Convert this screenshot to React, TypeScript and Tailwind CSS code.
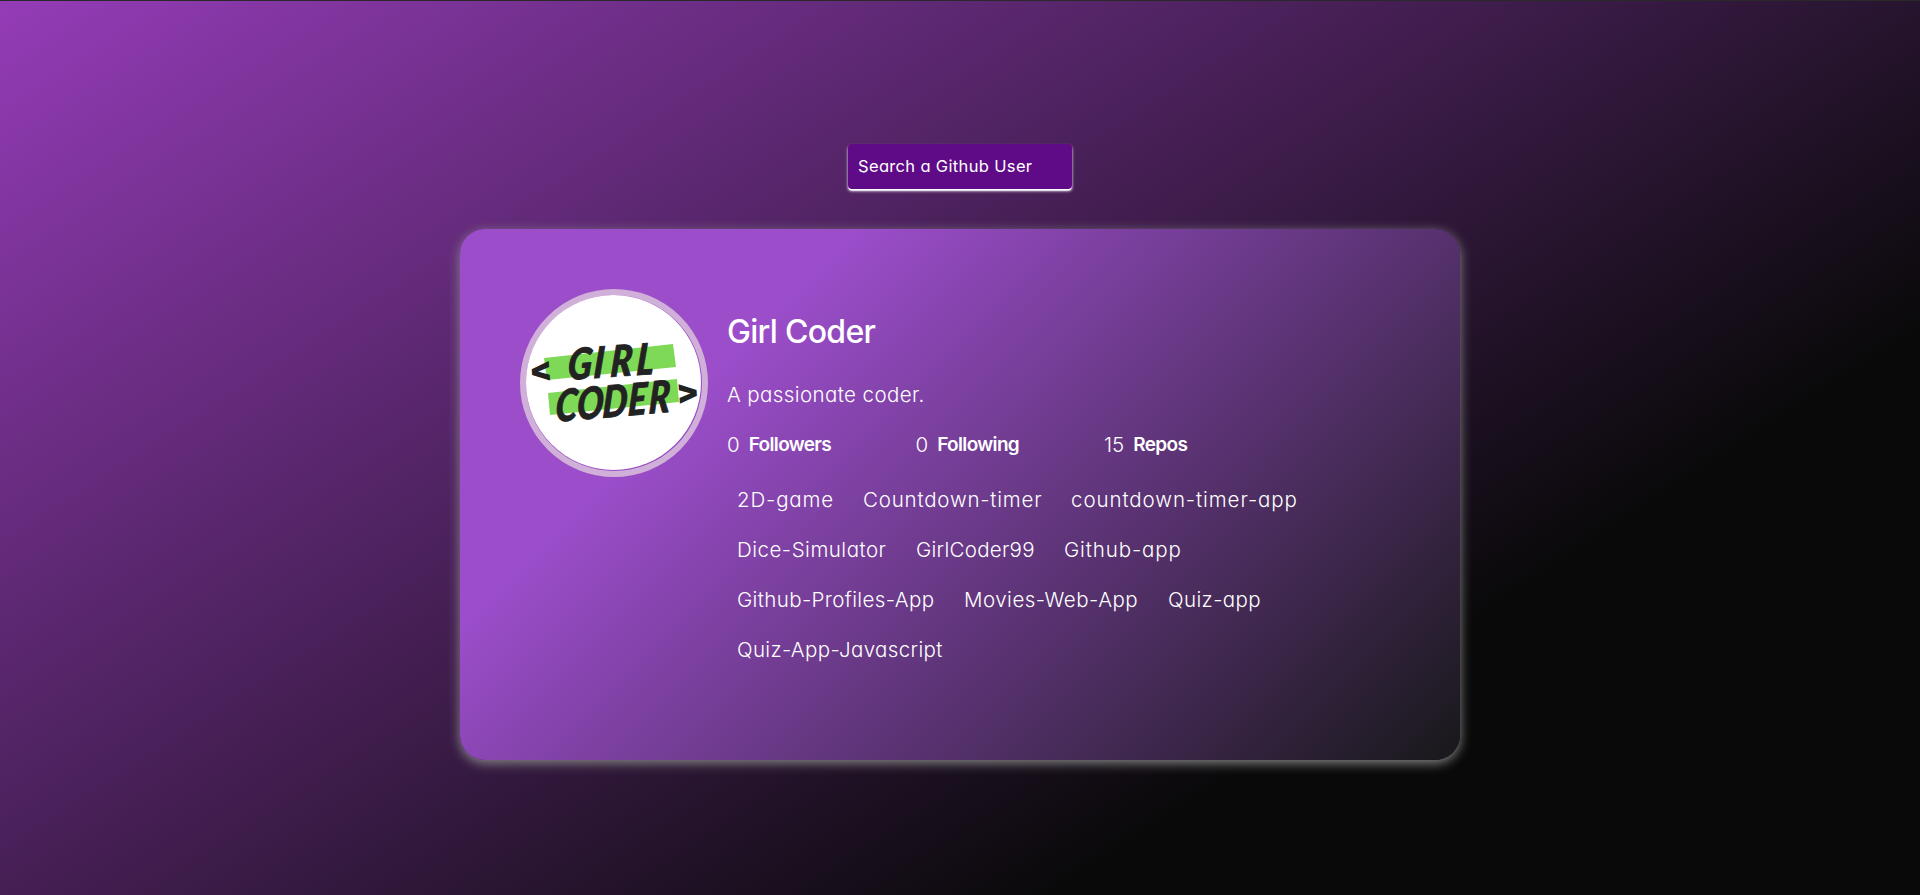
const repos = [
  { name: "2D-game", style: "w-[96px] tracking-[0.85px]" },
  { name: "Countdown-timer", style: "w-[178px] tracking-[0.8px]" },
  { name: "countdown-timer-app", style: "w-[226px] tracking-[0.92px]" },
  { name: "Dice-Simulator", style: "w-[149px] tracking-[0.5px]" },
  { name: "GirlCoder99", style: "w-[118px] tracking-[0.28px]" },
  { name: "Github-app", style: "w-[118px] tracking-[0.88px]" },
  { name: "Github-Profiles-App", style: "w-[197px] tracking-[0.38px]" },
  { name: "Movies-Web-App", style: "w-[174px] tracking-[0.5px]" },
  { name: "Quiz-app", style: "w-[93px] tracking-[0.4px]" },
  { name: "Quiz-App-Javascript", style: "w-[206px] tracking-[0.35px]" },
];

const stats = [
  { count: "0", label: "Followers" },
  { count: "0", label: "Following" },
  { count: "15", label: "Repos" },
];

function Avatar() {
  return (
    <svg className="size-[188px] shrink-0" viewBox="0 0 188 188" role="img">
      <circle cx="94" cy="94" r="91" fill="none" stroke="#d0b0d8" strokeWidth="6" />
      <circle cx="93.5" cy="93.5" r="87.5" fill="#fff" />
      <path d="M24 69 153 55l3 23L27 91zM28 104l129-14 2 23-129 13z" fill="#7ed957" />
      <g fill="#222" stroke="#222" strokeLinejoin="round" className="font-['Lato'] font-black italic">
        <text transform="translate(47 91) rotate(-4) skewX(-8) scale(.84 1)" fontSize="43" strokeWidth=".8" x="0 31 51 82">GIRL</text>
        <text transform="translate(35 133) rotate(-5) skewX(-8) scale(.8 1)" fontSize="44" strokeWidth=".8" x="0 27 59 91 117">CODER</text>
      </g>
      <g fill="#222" className="font-['Inter'] font-black">
        <text transform="translate(10 93) rotate(-4)" fontSize="33" textLength="23" lengthAdjust="spacingAndGlyphs">&lt;</text>
        <text transform="translate(157 115) rotate(-4)" fontSize="33" textLength="23" lengthAdjust="spacingAndGlyphs">&gt;</text>
      </g>
    </svg>
  );
}

export default function App() {
  return (
    <main className="flex h-[895px] flex-col items-center border-t border-[#292929] bg-[linear-gradient(147deg,#943cb7_0%,#090909_74%)] pt-[143px] font-['Inter',sans-serif] font-light text-white [font-feature-settings:'cv11']">
      <input
        className="h-[45px] w-[224px] rounded bg-[#5f0a87] px-2.5 pb-0.5 text-[16.5px] font-normal tracking-[0.34px] shadow-[0_2px_0_-0.5px_#fff,0_2px_3px_#fff] placeholder:text-white placeholder:opacity-100"
        placeholder="Search a Github User"
      />
      <section className="mt-10 flex h-[531px] w-[1000px] rounded-[25px] bg-[linear-gradient(135deg,#9b4dca_26%,#18181a_100%)] p-[60px] shadow-[0_3px_12px_#888]">
        <Avatar />
        <div className="ml-[19px] w-[620px] pt-[19px] text-[20.5px] leading-[30px]">
          <h2 className="text-[32px] leading-[48px] font-medium tracking-[-0.7px]">Girl Coder</h2>
          <p className="mt-6 tracking-[0.4px]">A passionate coder.</p>
          <ul className="mt-5 flex">
            {stats.map(({ count, label }) => (
              <li key={label} className="flex w-[188.500px] gap-[9px]">
                <span>{count}</span>
                <strong className="text-[19px] font-semibold tracking-[-0.65px]">{label}</strong>
              </li>
            ))}
          </ul>
          <div className="mt-[15px] flex flex-wrap gap-x-[30px] pl-2.5 leading-[50px]">
            {repos.map(({ name, style }) => (
              <span key={name} className={`whitespace-nowrap ${style}`}>{name}</span>
            ))}
          </div>
        </div>
      </section>
    </main>
  );
}
